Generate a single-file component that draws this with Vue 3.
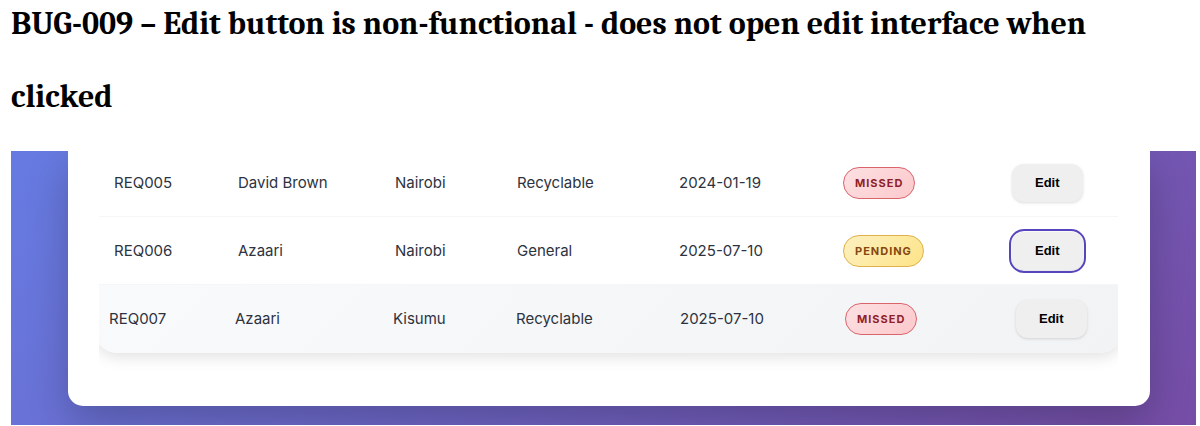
<script setup>
const requests = [
  { id: 'REQ005', name: 'David Brown', city: 'Nairobi', type: 'Recyclable', date: '2024-01-19', status: 'Missed' },
  { id: 'REQ006', name: 'Azaari', city: 'Nairobi', type: 'General', date: '2025-07-10', status: 'Pending', focused: true },
  { id: 'REQ007', name: 'Azaari', city: 'Kisumu', type: 'Recyclable', date: '2025-07-10', status: 'Missed', raised: true },
]
</script>

<template>
  <main class="report">
    <h1>BUG-009 – Edit button is non-functional - does not open edit interface when clicked</h1>
    <section class="backdrop">
      <div class="card">
        <div class="table-wrap">
          <table>
            <tbody>
              <tr v-for="r in requests" :key="r.id" :class="{ raised: r.raised }">
                <td>{{ r.id }}</td>
                <td>{{ r.name }}</td>
                <td>{{ r.city }}</td>
                <td>{{ r.type }}</td>
                <td>{{ r.date }}</td>
                <td><span class="badge" :class="r.status.toLowerCase()">{{ r.status }}</span></td>
                <td><button type="button" :class="{ focused: r.focused }">Edit</button></td>
              </tr>
            </tbody>
          </table>
        </div>
      </div>
    </section>
  </main>
</template>

<style>
body {
  margin: 0;
  background: #fff;
}
</style>

<style scoped>
.report {
  display: flow-root;
  padding: 0 4px 1px 11px;
}
h1 {
  margin: -13px 0 18px;
  padding-right: 40px;
  font: bold 32px/73px Cambria, Caladea, "Liberation Serif", serif;
  color: #000;
}
.backdrop {
  padding: 0 46px 19px 57px;
  overflow: hidden;
  background: linear-gradient(135deg, #667be2 0%, #764da6 100%);
}
.card {
  padding: 0 32px 22px 31px;
  border-radius: 0 0 15px 15px;
  background: #fff;
  box-shadow: 0 16px 40px rgba(0, 0, 0, 0.22);
}
.table-wrap {
  overflow: hidden;
  padding-bottom: 31px;
}
table,
tbody {
  display: block;
}
table {
  margin-top: -2px;
}
tr {
  display: grid;
  grid-template-columns: 124fr 157fr 122fr 162fr 164fr 169fr 121fr;
  align-items: center;
  box-sizing: border-box;
  height: 68px;
  border-bottom: 1px solid #f5f6f7;
}
tr.raised {
  grid-template-columns: 126fr 158fr 123fr 164fr 165fr 171fr 122fr;
  margin: 0 -5px;
  border-bottom: 0;
  border-radius: 0 0 24px 24px;
  background: linear-gradient(135deg, #f9fafb, #f1f3f5);
  box-shadow: 0 4px 16px rgba(0, 0, 0, 0.12);
  clip-path: inset(0 0 -31px 0);
}
td {
  padding: 0 15px;
  font: 15px/24px Inter, sans-serif;
  color: #2d3340;
  white-space: nowrap;
}
.badge {
  display: inline-block;
  padding: 6px 11px;
  border: 1px solid;
  border-radius: 16px;
  font-size: 11px;
  font-weight: 700;
  line-height: 18px;
  letter-spacing: 1px;
  text-transform: uppercase;
  vertical-align: middle;
}
.missed {
  color: #8f1f28;
  border-color: #d9646c;
  background: linear-gradient(135deg, #fde0e2, #fcc9cc);
}
.pending {
  color: #86480f;
  border-color: #e0b04a;
  background: linear-gradient(135deg, #fdf0c0, #fde488);
}
button {
  display: block;
  padding: 11px 23px;
  border: 0;
  border-radius: 12px;
  background: #efefef;
  color: #000;
  font: bold 13px/16px "Liberation Sans", Arial, sans-serif;
  box-shadow: 0 1px 3px rgba(0, 0, 0, 0.14);
}
button.focused {
  outline: 2px solid #5646bd;
  outline-offset: 1px;
}
</style>
